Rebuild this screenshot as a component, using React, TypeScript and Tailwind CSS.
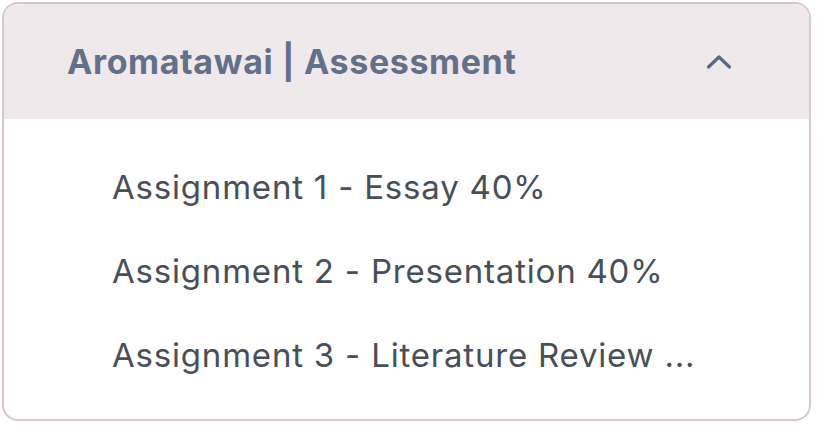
import React from "react";

export default function App() {
  const items = [
    "Assignment 1 - Essay 40%",
    "Assignment 2 - Presentation 40%",
    "Assignment 3 - Literature Review ...",
  ];
  return (
    <div className="w-[818px] h-[429px] bg-white pl-[2px] pt-[2px]" style={{ fontFamily: "Inter, sans-serif" }}>
      <div className="w-[809px] h-[419px] rounded-[16px] border-2 border-[#d9c6cc] overflow-hidden flex flex-col">
        <div className="h-[115px] shrink-0 bg-[#f0e9ec] flex items-center justify-between pl-[63px] pr-[76px]">
          <span className="text-[34px] font-bold text-[#637089] tracking-[0.62px]">Aromatawai | Assessment</span>
          <svg width="28" height="18" viewBox="0 0 28 18" fill="none">
            <path d="M3.5 14 L14 4 L24.5 14" stroke="#5b6884" strokeWidth="3.2" strokeLinecap="round" strokeLinejoin="round" />
          </svg>
        </div>
        <div className="flex flex-col pl-[108px] pt-[46px] gap-[40px]">
          {items.map((t) => (
            <div key={t} className="text-[33px] leading-[44px] text-[#484f58] tracking-[0.8px]">{t}</div>
          ))}
        </div>
      </div>
    </div>
  );
}
